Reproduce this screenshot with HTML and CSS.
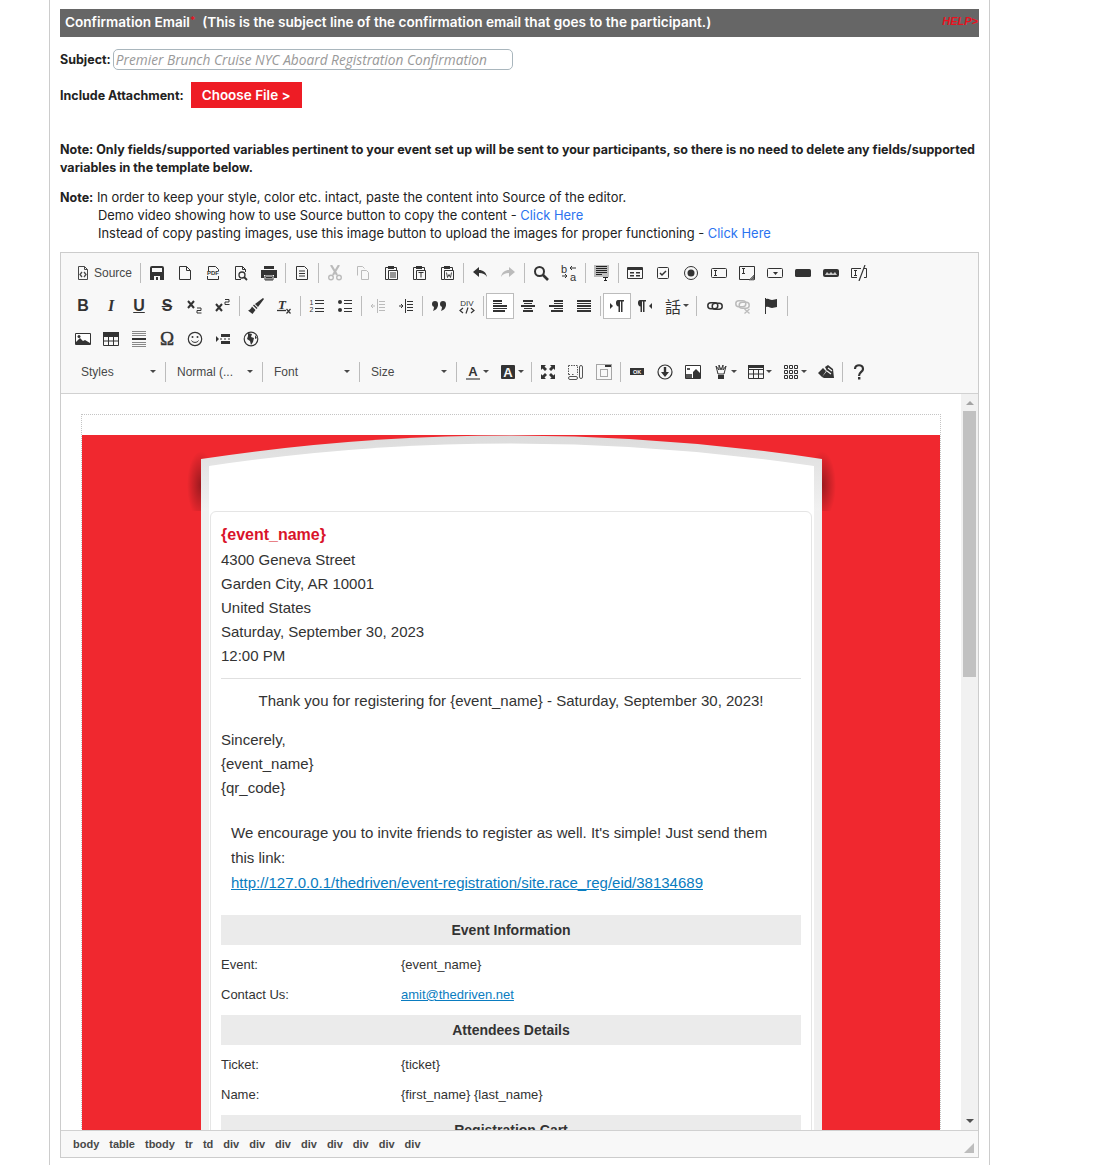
FILE: index.html
```html
<!DOCTYPE html>
<html lang="en">
<head>
    <meta charset="UTF-8">
    <title>Confirmation Email</title>
    <link rel="stylesheet" href="styles.css">
</head>
<body>
    <svg class="sprite">
        <symbol id="source" viewBox="0 0 16 16"><path d="M3.500 1.500h6l3 3v10h-9z M9.500 1.500v3h3" fill="none" stroke="currentColor"/><path d="M7 7L5 9.500 7 12M9 7l2 2.500L9 12" fill="none" stroke="currentColor" stroke-width="1.300"/></symbol>
        <symbol id="save" viewBox="0 0 16 16"><path d="M1 3a2 2 0 0 1 2-2h10a2 2 0 0 1 2 2v12H1z" fill="currentColor"/><path d="M3 3h10v4H3zM5 11h6v4H5z" fill="#f8f8f8"/><path d="M7 12h2v3H7z" fill="currentColor"/></symbol>
        <symbol id="newpage" viewBox="0 0 16 16"><path d="M2.500 1.500h7l4 4v9h-11z M9.500 1.500v4h4" fill="none" stroke="currentColor"/></symbol>
        <symbol id="pdf" viewBox="0 0 16 16"><path d="M3.500 6V1.500h7l3 3V6M2.500 11v3.500h11V11" fill="none" stroke="currentColor"/><text x="8" y="10.200" class="tiny">PDF</text></symbol>
        <symbol id="preview" viewBox="0 0 16 16"><path d="M8 14.500H2.500v-13h7l3 3V7M9.500 1.500v3h3" fill="none" stroke="currentColor"/><circle cx="9" cy="10" r="3" fill="none" stroke="currentColor" stroke-width="1.300"/><path d="M11 12l3 3" stroke="currentColor" stroke-width="1.800"/></symbol>
        <symbol id="print" viewBox="0 0 16 16"><path d="M3 1h10v3H3zM0 5h16v8h-3v-3H3v3H0z" fill="currentColor"/><path d="M4 11h8v4H4zM5 12.500h6M5 14h6" fill="none" stroke="currentColor"/></symbol>
        <symbol id="templates" viewBox="0 0 16 16"><path d="M2.500 1.500h8l3 3v10h-11z" fill="none" stroke="currentColor"/><path d="M5 6h6M5 8.500h6M5 11h6" stroke="currentColor"/></symbol>
        <symbol id="cut" viewBox="0 0 16 16"><path d="M4 0l6 10M12 0L6 10" stroke="currentColor" stroke-width="2.200"/><circle cx="4" cy="12.500" r="2.300" fill="none" stroke="currentColor" stroke-width="1.400"/><circle cx="12" cy="12.500" r="2.300" fill="none" stroke="currentColor" stroke-width="1.400"/></symbol>
        <symbol id="copy" viewBox="0 0 16 16"><path d="M2.500 10.500v-9h5l2 2M6.500 5.500h5l2 2v7h-7z" fill="none" stroke="currentColor"/></symbol>
        <symbol id="paste" viewBox="0 0 16 16"><path d="M5 2.500H2.500v12H5M11 2.500h2.500V5" fill="none" stroke="currentColor"/><path d="M5 1h6v3H5z" fill="currentColor"/><path d="M5.500 5.500h9v9h-9z" fill="none" stroke="currentColor"/><path d="M7 8h6M7 10h6M7 12h6" stroke="currentColor"/></symbol>
        <symbol id="pastetext" viewBox="0 0 16 16"><path d="M5 2.500H2.500v12H5M11 2.500h2.500V5" fill="none" stroke="currentColor"/><path d="M5 1h6v3H5z" fill="currentColor"/><path d="M5.500 5.500h9v9h-9z" fill="none" stroke="currentColor"/><path d="M7.500 7.500h5M10 7.500v5" stroke="currentColor"/></symbol>
        <symbol id="pasteword" viewBox="0 0 16 16"><path d="M5 2.500H2.500v12H5M11 2.500h2.500V5" fill="none" stroke="currentColor"/><path d="M5 1h6v3H5z" fill="currentColor"/><path d="M5.500 5.500h9v9h-9z" fill="none" stroke="currentColor"/><path d="M7.500 7.500l1 5 1.500-3 1.500 3 1-5" fill="none" stroke="currentColor" stroke-width=".9"/></symbol>
        <symbol id="undo" viewBox="0 0 16 16"><path d="M1 7l6-5v3c4 0 7 2 8 7-2-3-4-4-8-4v4z" fill="currentColor"/></symbol>
        <symbol id="redo" viewBox="0 0 16 16"><path d="M15 7L9 2v3c-4 0-7 2-8 7 2-3 4-4 8-4v4z" fill="currentColor"/></symbol>
        <symbol id="find" viewBox="0 0 16 16"><circle cx="6.500" cy="6.500" r="4.500" fill="none" stroke="currentColor" stroke-width="2"/><path d="M10 10l5 5" stroke="currentColor" stroke-width="2.600"/></symbol>
        <symbol id="replace" viewBox="0 0 16 16"><text x="3" y="8" class="small">b</text><text x="12" y="16" class="small">a</text><path d="M15 3H9M11 1L9 3l2 2M1 11h5M4 9l2 2-2 2" fill="none" stroke="currentColor"/></symbol>
        <symbol id="selectall" viewBox="0 0 16 16"><path d="M0 0h15v12H0z" fill="#bdbdbd"/><path d="M2 1.500h11M2 3.500h11M2 5.500h11M2 7.500h11M2 9.500h6M9 12.500h5M11.500 12.500v3M10 15.500h3" stroke="#222" fill="none"/></symbol>
        <symbol id="form" viewBox="0 0 16 16"><path d="M.5 2.500h15v11H.5z" fill="none" stroke="currentColor"/><path d="M1 3h14v2H1zM3 7h4v1.500H3zM9 7h4v1.500H9zM3 10h4v1.500H3zM9 10h4v1.500H9z" fill="currentColor"/></symbol>
        <symbol id="checkbox" viewBox="0 0 16 16"><rect x="2.500" y="2.500" width="11" height="11" rx="1" fill="none" stroke="currentColor"/><path d="M5 8l2 2 4-4" fill="none" stroke="currentColor" stroke-width="1.500"/></symbol>
        <symbol id="radio" viewBox="0 0 16 16"><circle cx="8" cy="8" r="6.500" fill="none" stroke="currentColor"/><circle cx="8" cy="8" r="3.500" fill="currentColor"/></symbol>
        <symbol id="textfield" viewBox="0 0 16 16"><rect x=".5" y="3.500" width="15" height="9" rx="1" fill="none" stroke="currentColor"/><path d="M3 5.500h3M4.500 5.500v5M3 10.500h3" fill="none" stroke="currentColor"/></symbol>
        <symbol id="textarea" viewBox="0 0 16 16"><path d="M.5 1.500h15v13H.5z" fill="none" stroke="currentColor"/><path d="M3 3.500h3M4.500 3.500v5M3 8.500h3" fill="none" stroke="currentColor"/><path d="M15 10v5h-5zM12 15l3-3" fill="#888" stroke="#444" stroke-width=".6"/></symbol>
        <symbol id="select" viewBox="0 0 16 16"><rect x=".5" y="3.500" width="15" height="9" rx="1" fill="none" stroke="currentColor"/><path d="M6 7h5L8.500 10z" fill="currentColor"/></symbol>
        <symbol id="button" viewBox="0 0 16 16"><rect y="4" width="16" height="8" rx="1.500" fill="currentColor"/></symbol>
        <symbol id="imagebutton" viewBox="0 0 16 16"><rect y="4" width="16" height="8" rx="2" fill="currentColor"/><path d="M2 10l2-3 2 2 2-2 2 2 2-2 2 3z" fill="#ccc"/></symbol>
        <symbol id="hiddenfield" viewBox="0 0 16 16"><path d="M10 3.500H.5v9H6M13 3.500h2.500v9H13" fill="none" stroke="currentColor"/><path d="M3 5.500h3M4.500 5.500v5M3 10.500h3" fill="none" stroke="currentColor"/><path d="M14 0L8 16" stroke="currentColor" stroke-width="1.200"/></symbol>
        <symbol id="subs" viewBox="0 0 16 16"><path d="M1 3l6 7M7 3l-6 7" stroke="currentColor" stroke-width="2"/><path d="M10 10h4v2.500h-4V15h4.500" fill="none" stroke="currentColor"/></symbol>
        <symbol id="sups" viewBox="0 0 16 16"><path d="M1 6l6 7M7 6l-6 7" stroke="currentColor" stroke-width="2"/><path d="M10 1.500h4V4h-4v2.500h4.500" fill="none" stroke="currentColor"/></symbol>
        <symbol id="brush" viewBox="0 0 16 16"><path d="M15 0l1 1-6 8-3-3z" fill="currentColor"/><path d="M6 6.500l3.500 3.500-1 1L5 7.500z" fill="currentColor"/><path d="M4 8.500l3.500 3.500-3 4-4.500-3.500c2-.5 3-2 4-4z" fill="currentColor"/></symbol>
        <symbol id="clearformat" viewBox="0 0 16 16"><text x="6" y="11" class="ital">T</text><path d="M1 12.500h9" stroke="currentColor" stroke-width="1.300"/><path d="M10.500 11l4 4.500M14.500 11l-4 4.500" stroke="currentColor" stroke-width="1.200"/></symbol>
        <symbol id="ol" viewBox="0 0 16 16"><text x="2.500" y="6.500" class="num">1</text><text x="2.500" y="14" class="num">2</text><path d="M6 2.500h9M6 5.500h9M6 10.500h9M6 13.500h9" stroke="currentColor"/></symbol>
        <symbol id="ul" viewBox="0 0 16 16"><circle cx="3" cy="4" r="2" fill="currentColor"/><circle cx="3" cy="12" r="2" fill="currentColor"/><path d="M7 2.500h8M7 5.500h8M7 10.500h8M7 13.500h8" stroke="currentColor"/></symbol>
        <symbol id="outdent" viewBox="0 0 16 16"><path d="M7.500 1v14M9 3.500h6M9 6.500h6M9 9.500h6M9 12.500h6" stroke="currentColor"/><path d="M5 8H1M3 6L1 8l2 2" fill="none" stroke="currentColor"/></symbol>
        <symbol id="indent" viewBox="0 0 16 16"><path d="M7.500 1v14M9 3.500h6M9 6.500h6M9 9.500h6M9 12.500h6" stroke="currentColor"/><path d="M1 8h4M3 6l2 2-2 2" fill="none" stroke="currentColor"/></symbol>
        <symbol id="quote" viewBox="0 0 16 16"><circle cx="4" cy="6" r="3" fill="currentColor"/><circle cx="12" cy="6" r="3" fill="currentColor"/><path d="M7 6c0 4-2 6-5 7 1-2 1-4 1-6zM15 6c0 4-2 6-5 7 1-2 1-4 1-6z" fill="currentColor"/></symbol>
        <symbol id="creatediv" viewBox="0 0 16 16"><text x="8" y="7.500" class="tiny2">DIV</text><path d="M4 10l-3 2.500L4 15M12 10l3 2.500-3 2.500M9 9.500l-2 6" fill="none" stroke="currentColor" stroke-width="1.200"/></symbol>
        <symbol id="left" viewBox="0 0 16 16"><path d="M1 2h9v2H1zM1 7h14v2H1zM1 12h12v2H1z" fill="currentColor"/><path d="M1 5.500h9M1 10.500h14" stroke="currentColor"/></symbol>
        <symbol id="center" viewBox="0 0 16 16"><path d="M3 2h10v2H3zM1 7h14v2H1zM3 12h10v2H3z" fill="currentColor"/><path d="M4 5.500h8M4 10.500h8" stroke="currentColor"/></symbol>
        <symbol id="right" viewBox="0 0 16 16"><path d="M6 2h9v2H6zM1 7h14v2H1zM3 12h12v2H3z" fill="currentColor"/><path d="M6 5.500h9M6 10.500h9" stroke="currentColor"/></symbol>
        <symbol id="justify" viewBox="0 0 16 16"><path d="M1 2h14v2H1zM1 7h14v2H1zM1 12h14v2H1z" fill="currentColor"/><path d="M1 5.500h14M1 10.500h14" stroke="currentColor"/></symbol>
        <symbol id="ltr" viewBox="0 0 16 16"><path d="M1 5l3 3-3 3z" fill="currentColor"/><path d="M9 2h6v1.500h-1.500V14H12V3.500h-1V14H9.500V8.500C6.500 8.500 6 2 9 2z" fill="currentColor"/></symbol>
        <symbol id="rtl" viewBox="0 0 16 16"><path d="M15 5l-3 3 3 3z" fill="currentColor"/><path d="M3 2h6v1.500H7.500V14H6V3.500H5V14H3.500V8.500C.5 8.500 0 2 3 2z" fill="currentColor"/></symbol>
        <symbol id="link" viewBox="0 0 16 16"><rect x=".8" y="4.800" width="10" height="6" rx="3" fill="none" stroke="currentColor" stroke-width="1.500"/><rect x="5.200" y="5.200" width="10" height="6" rx="3" fill="none" stroke="currentColor" stroke-width="1.500"/></symbol>
        <symbol id="unlink" viewBox="0 0 16 16"><rect x=".8" y="2.800" width="10" height="6" rx="3" fill="none" stroke="currentColor" stroke-width="1.500"/><rect x="4.200" y="4.200" width="10" height="6" rx="3" fill="none" stroke="currentColor" stroke-width="1.500"/><path d="M9.500 11l5 4.500M14.500 11l-5 4.500" stroke="currentColor" stroke-width="1.300"/></symbol>
        <symbol id="anchor" viewBox="0 0 16 16"><path d="M2.500 0v16" stroke="currentColor"/><path d="M3 1c3-1 4 1 6 1l5-1v8l-5 1c-2 0-3-2-6-1z" fill="currentColor"/></symbol>
        <symbol id="image" viewBox="0 0 16 16"><path d="M.5 2.500h15v11H.5z" fill="#fff" stroke="currentColor"/><path d="M1 13V11l4-4 3 3 2-1 5 3v1z" fill="currentColor"/><circle cx="4" cy="5.500" r="1.500" fill="currentColor"/></symbol>
        <symbol id="table" viewBox="0 0 16 16"><path d="M.5 1.500h15v13H.5zM.5 5.500h15M.5 10h15M5.500 5.500v9M10.500 5.500v9" fill="none" stroke="currentColor"/><path d="M0 1h16v4H0z" fill="currentColor"/></symbol>
        <symbol id="hr" viewBox="0 0 16 16"><path d="M1 .5h14M1 2.500h14M1 4.500h14M1 11.500h14M1 13.500h14M1 15.500h14" stroke="#888"/><path d="M1 7h14v2H1z" fill="currentColor"/></symbol>
        <symbol id="smiley" viewBox="0 0 16 16"><circle cx="8" cy="8" r="6.700" fill="none" stroke="currentColor" stroke-width="1.200"/><circle cx="5.500" cy="6" r="1" fill="currentColor"/><circle cx="10.500" cy="6" r="1" fill="currentColor"/><path d="M4.500 9.500c1 2.500 6 2.500 7 0" fill="none" stroke="currentColor"/></symbol>
        <symbol id="pagebreak" viewBox="0 0 16 16"><path d="M1 5l3 3-3 3z" fill="currentColor"/><path d="M6 3h9v3H6zM6 10h9v3H6z" fill="currentColor"/><path d="M5 8h2M9 8h2M13 8h2" stroke="currentColor"/></symbol>
        <symbol id="globe" viewBox="0 0 16 16"><circle cx="8" cy="8" r="6.800" fill="none" stroke="currentColor" stroke-width="1.200"/><path d="M5 2l4 1-1 3 3 1-1 4-2 3-1-4-3-2 1-3zM12 4l2 3-2 1z" fill="currentColor"/></symbol>
        <symbol id="textcolor" viewBox="0 0 16 16"><text x="8" y="11.500" class="big">A</text><path d="M1 14h14v2H1z" fill="#8a8a8a"/></symbol>
        <symbol id="bgcolor" viewBox="0 0 16 16"><rect x="1" y="1" width="14" height="14" rx="1" fill="currentColor"/><text x="8" y="12.500" class="big white">A</text></symbol>
        <symbol id="maximize" viewBox="0 0 16 16"><path d="M1 1h5L4.500 2.500 7 5 5 7 2.500 4.500 1 6zM15 1v5l-1.500-1.500L11 7 9 5l2.500-2.500L10 1zM1 15v-5l1.500 1.500L5 9l2 2-2.500 2.500L6 15zM15 15h-5l1.500-1.500L9 11l2-2 2.500 2.500L15 10z" fill="currentColor"/></symbol>
        <symbol id="showblocks" viewBox="0 0 16 16"><path d="M.5 1.500h9v9M.5 1.500v9M.5 10.500h2M4 10.500h2" fill="none" stroke="#555" stroke-dasharray="1.500 1"/><rect x="11.500" y="1.500" width="3" height="13" rx="1.500" fill="none" stroke="#555"/><rect x=".5" y="12.500" width="9" height="3" rx="1.500" fill="none" stroke="#555"/></symbol>
        <symbol id="blocks" viewBox="0 0 16 16"><path d="M.5.500h15v15H.5z" fill="none" stroke="#555" stroke-dasharray="1 1"/><path d="M9 1h6v2H9z" fill="currentColor"/><path d="M4.500 5.500h7v7h-7z" fill="none" stroke="#555" stroke-dasharray="1 1"/></symbol>
        <symbol id="okbtn" viewBox="0 0 16 16"><path d="M1 4h14v7H1z" fill="currentColor"/><text x="8" y="9.500" class="tiny3">OK</text></symbol>
        <symbol id="download" viewBox="0 0 16 16"><circle cx="8" cy="8" r="7" fill="none" stroke="currentColor" stroke-width="1.200"/><path d="M6.800 3h2.400v5H12l-4 5-4-5h2.800z" fill="currentColor"/></symbol>
        <symbol id="gallery" viewBox="0 0 16 16"><path d="M.5 1.500h15v13H.5z" fill="#fff" stroke="currentColor"/><path d="M8 8l3-3 4 4v5H8z" fill="currentColor"/><path d="M2 4h3v2H2zM1 10h6v4H1z" fill="#555"/></symbol>
        <symbol id="crown" viewBox="0 0 16 16"><path d="M3 2l3 4V1l2 5 2-5v5l3-4-2 8H5z" fill="none" stroke="currentColor"/><path d="M5 11h6v4H5z" fill="currentColor"/></symbol>
        <symbol id="tablesel" viewBox="0 0 16 16"><path d="M.5 1.500h15v13H.5zM.5 5.500h15M.5 10h15M5.500 5.500v9M10.500 5.500v9" fill="none" stroke="currentColor"/><path d="M0 1h16v3H0z" fill="currentColor"/></symbol>
        <symbol id="grid" viewBox="0 0 16 16"><path d="M1.500 1.500h3v3h-3zM6.500 1.500h3v3h-3zM11.500 1.500h3v3h-3zM1.500 6.500h3v3h-3zM6.500 6.500h3v3h-3zM11.500 6.500h3v3h-3zM1.500 11.500h3v3h-3zM6.500 11.500h3v3h-3zM11.500 11.500h3v3h-3z" fill="none" stroke="currentColor"/></symbol>
        <symbol id="wand" viewBox="0 0 16 16"><path d="M0 9l5-5 3 3-4 6zM7 3l3-2 5 4 1 9H6l-2-1 5-6z" fill="currentColor"/><path d="M10 4l4 3M9 7l4 3" stroke="#f8f8f8" stroke-width="1.200"/></symbol>
        <symbol id="help" viewBox="0 0 16 16"><path d="M4 5c0-5 8-5 8 0 0 3-4 3-4 7" fill="none" stroke="currentColor" stroke-width="2.200"/><path d="M7 13h2.400v2.500H7z" fill="currentColor"/></symbol>
    </svg>

    <div class="wrap">
        <div class="bar">
            <span class="bar-title">Confirmation Email<i class="req">*</i>&nbsp; (This is the subject line of the confirmation email that goes to the participant.)</span>
            <a class="help" href="#">HELP&gt;</a>
        </div>

        <div class="subject">
            <label class="strong">Subject:</label>
            <input class="subject-input" type="text" placeholder="Premier Brunch Cruise NYC Aboard Registration Confirmation">
        </div>

        <div class="attach">
            <label class="strong">Include Attachment:</label>
            <a class="choose" href="#">Choose File &gt;</a>
        </div>

        <p class="note-bold">Note: Only fields/supported variables pertinent to your event set up will be sent to your participants, so there is no need to delete any fields/supported variables in the template below.</p>

        <div class="note">
            <p><b class="strong">Note:</b> In order to keep your style, color etc. intact, paste the content into Source of the editor.</p>
            <p class="indent">Demo video showing how to use Source button to copy the content - <a href="#">Click Here</a></p>
            <p class="indent">Instead of copy pasting images, use this image button to upload the images for proper functioning - <a href="#">Click Here</a></p>
        </div>

        <div class="editor">
            <div class="toolbar">
                <div class="row">
                    <span class="btn source"><svg class="ic"><use href="#source"/></svg>Source</span>
                    <i class="sep"></i>
                    <span class="btn"><svg class="ic"><use href="#save"/></svg></span>
                    <span class="btn"><svg class="ic"><use href="#newpage"/></svg></span>
                    <span class="btn"><svg class="ic"><use href="#pdf"/></svg></span>
                    <span class="btn"><svg class="ic"><use href="#preview"/></svg></span>
                    <span class="btn"><svg class="ic"><use href="#print"/></svg></span>
                    <i class="sep"></i>
                    <span class="btn"><svg class="ic"><use href="#templates"/></svg></span>
                    <i class="sep"></i>
                    <span class="btn off"><svg class="ic"><use href="#cut"/></svg></span>
                    <span class="btn off"><svg class="ic"><use href="#copy"/></svg></span>
                    <span class="btn"><svg class="ic"><use href="#paste"/></svg></span>
                    <span class="btn"><svg class="ic"><use href="#pastetext"/></svg></span>
                    <span class="btn"><svg class="ic"><use href="#pasteword"/></svg></span>
                    <i class="sep"></i>
                    <span class="btn"><svg class="ic"><use href="#undo"/></svg></span>
                    <span class="btn off"><svg class="ic"><use href="#redo"/></svg></span>
                    <i class="sep"></i>
                    <span class="btn"><svg class="ic"><use href="#find"/></svg></span>
                    <span class="btn"><svg class="ic"><use href="#replace"/></svg></span>
                    <i class="sep"></i>
                    <span class="btn"><svg class="ic"><use href="#selectall"/></svg></span>
                    <i class="sep"></i>
                    <span class="btn"><svg class="ic"><use href="#form"/></svg></span>
                    <span class="btn"><svg class="ic"><use href="#checkbox"/></svg></span>
                    <span class="btn"><svg class="ic"><use href="#radio"/></svg></span>
                    <span class="btn"><svg class="ic"><use href="#textfield"/></svg></span>
                    <span class="btn"><svg class="ic"><use href="#textarea"/></svg></span>
                    <span class="btn"><svg class="ic"><use href="#select"/></svg></span>
                    <span class="btn"><svg class="ic"><use href="#button"/></svg></span>
                    <span class="btn"><svg class="ic"><use href="#imagebutton"/></svg></span>
                    <span class="btn"><svg class="ic"><use href="#hiddenfield"/></svg></span>
                </div>
                <div class="row">
                    <span class="btn"><b class="fmt">B</b></span>
                    <span class="btn"><b class="fmt it">I</b></span>
                    <span class="btn"><b class="fmt un">U</b></span>
                    <span class="btn"><b class="fmt st">S</b></span>
                    <span class="btn"><svg class="ic"><use href="#subs"/></svg></span>
                    <span class="btn"><svg class="ic"><use href="#sups"/></svg></span>
                    <i class="sep"></i>
                    <span class="btn"><svg class="ic"><use href="#brush"/></svg></span>
                    <span class="btn"><svg class="ic"><use href="#clearformat"/></svg></span>
                    <i class="sep"></i>
                    <span class="btn"><svg class="ic"><use href="#ol"/></svg></span>
                    <span class="btn"><svg class="ic"><use href="#ul"/></svg></span>
                    <i class="sep"></i>
                    <span class="btn off"><svg class="ic"><use href="#outdent"/></svg></span>
                    <span class="btn"><svg class="ic"><use href="#indent"/></svg></span>
                    <i class="sep"></i>
                    <span class="btn"><svg class="ic"><use href="#quote"/></svg></span>
                    <span class="btn"><svg class="ic"><use href="#creatediv"/></svg></span>
                    <i class="sep"></i>
                    <span class="btn on"><svg class="ic"><use href="#left"/></svg></span>
                    <span class="btn"><svg class="ic"><use href="#center"/></svg></span>
                    <span class="btn"><svg class="ic"><use href="#right"/></svg></span>
                    <span class="btn"><svg class="ic"><use href="#justify"/></svg></span>
                    <i class="sep"></i>
                    <span class="btn on"><svg class="ic"><use href="#ltr"/></svg></span>
                    <span class="btn"><svg class="ic"><use href="#rtl"/></svg></span>
                    <span class="btn drop"><span class="lang">話</span><i class="caret"></i></span>
                    <i class="sep"></i>
                    <span class="btn lang-gap"><svg class="ic"><use href="#link"/></svg></span>
                    <span class="btn off"><svg class="ic"><use href="#unlink"/></svg></span>
                    <span class="btn"><svg class="ic"><use href="#anchor"/></svg></span>
                    <i class="sep"></i>
                </div>
                <div class="row">
                    <span class="btn"><svg class="ic"><use href="#image"/></svg></span>
                    <span class="btn"><svg class="ic"><use href="#table"/></svg></span>
                    <span class="btn"><svg class="ic"><use href="#hr"/></svg></span>
                    <span class="btn"><b class="omega">Ω</b></span>
                    <span class="btn"><svg class="ic"><use href="#smiley"/></svg></span>
                    <span class="btn"><svg class="ic"><use href="#pagebreak"/></svg></span>
                    <span class="btn"><svg class="ic"><use href="#globe"/></svg></span>
                </div>
                <div class="row">
                    <span class="combo first">Styles<i class="caret"></i></span>
                    <i class="sep"></i>
                    <span class="combo">Normal (...<i class="caret"></i></span>
                    <i class="sep"></i>
                    <span class="combo">Font<i class="caret"></i></span>
                    <i class="sep"></i>
                    <span class="combo">Size<i class="caret"></i></span>
                    <i class="sep"></i>
                    <span class="btn drop"><svg class="ic"><use href="#textcolor"/></svg><i class="caret"></i></span>
                    <span class="btn drop"><svg class="ic"><use href="#bgcolor"/></svg><i class="caret"></i></span>
                    <i class="sep"></i>
                    <span class="btn"><svg class="ic"><use href="#maximize"/></svg></span>
                    <span class="btn"><svg class="ic"><use href="#showblocks"/></svg></span>
                    <span class="btn"><svg class="ic"><use href="#blocks"/></svg></span>
                    <i class="sep"></i>
                    <span class="btn"><svg class="ic"><use href="#okbtn"/></svg></span>
                    <span class="btn"><svg class="ic"><use href="#download"/></svg></span>
                    <span class="btn"><svg class="ic"><use href="#gallery"/></svg></span>
                    <span class="btn drop"><svg class="ic"><use href="#crown"/></svg><i class="caret"></i></span>
                    <span class="btn drop"><svg class="ic"><use href="#tablesel"/></svg><i class="caret"></i></span>
                    <span class="btn drop"><svg class="ic"><use href="#grid"/></svg><i class="caret"></i></span>
                    <span class="btn"><svg class="ic"><use href="#wand"/></svg></span>
                    <i class="sep"></i>
                    <span class="btn"><svg class="ic"><use href="#help"/></svg></span>
                </div>
            </div>

            <div class="content">
                <div class="doc">
                    <div class="mail">
                        <div class="red">
                            <div class="sheet">
                                <svg class="sheet-top" viewBox="0 0 621 76">
                                    <defs>
                                        <radialGradient id="shade">
                                            <stop offset="0" stop-color="#000" stop-opacity=".36"/>
                                            <stop offset="1" stop-color="#000" stop-opacity="0"/>
                                        </radialGradient>
                                        <linearGradient id="frame" x1="0" y1="0" x2="0" y2="1">
                                            <stop offset="0" stop-color="#dcdcdc"/>
                                            <stop offset="1" stop-color="#f1f1f1"/>
                                        </linearGradient>
                                        <clipPath id="cut-shade">
                                            <rect x="-20" y="0" width="661" height="76"/>
                                        </clipPath>
                                    </defs>
                                    <g clip-path="url(#cut-shade)">
                                        <ellipse cx="0" cy="50" rx="14" ry="34" fill="url(#shade)"/>
                                        <ellipse cx="621" cy="50" rx="14" ry="34" fill="url(#shade)"/>
                                    </g>
                                    <path d="M0 24Q310.500 -23 621 24V76H0z" fill="url(#frame)"/>
                                    <path d="M8 31Q310.500 -14 613 31V76H8z" fill="#fff"/>
                                </svg>
                                <div class="card">
                                    <h2 class="event-name">{event_name}</h2>
                                    <div>4300 Geneva Street</div>
                                    <div>Garden City, AR 10001</div>
                                    <div>United States</div>
                                    <div>Saturday, September 30, 2023</div>
                                    <div>12:00 PM</div>
                                    <hr class="rule">
                                    <div class="thanks">Thank you for registering for {event_name} - Saturday, September 30, 2023!</div>
                                    <div class="signoff">
                                        <div>Sincerely,</div>
                                        <div>{event_name}</div>
                                        <div>{qr_code}</div>
                                    </div>
                                    <div class="invite">We encourage you to invite friends to register as well. It's simple! Just send them this link:<br><a href="#">http://127.0.0.1/thedriven/event-registration/site.race_reg/eid/38134689</a></div>
                                    <div class="band">Event Information</div>
                                    <div class="rows">
                                        <div class="info"><span>Event:</span><span>{event_name}</span></div>
                                        <div class="info"><span>Contact Us:</span><a href="#">amit@thedriven.net</a></div>
                                    </div>
                                    <div class="band">Attendees Details</div>
                                    <div class="rows">
                                        <div class="info"><span>Ticket:</span><span>{ticket}</span></div>
                                        <div class="info"><span>Name:</span><span>{first_name} {last_name}</span></div>
                                    </div>
                                    <div class="band">Registration Cart</div>
                                </div>
                            </div>
                        </div>
                    </div>
                </div>
                <div class="scrollbar">
                    <i class="arrow-up"></i>
                    <div class="thumb"></div>
                    <i class="arrow-down"></i>
                </div>
            </div>

            <div class="path">
                <span>body</span><span>table</span><span>tbody</span><span>tr</span><span>td</span><span>div</span><span>div</span><span>div</span><span>div</span><span>div</span><span>div</span><span>div</span><span>div</span>
                <i class="resize"></i>
            </div>
        </div>
    </div>
</body>
</html>
```

FILE: styles.css
```css
* {
    box-sizing: border-box;
}

html, body {
    margin: 0;
    padding: 0;
    background: #fff;
}

.sprite {
    display: none;
}

.wrap {
    margin-left: 49px;
    width: 941px;
    height: 1165px;
    overflow: hidden;
    padding: 9px 10px 0;
    border-left: 1px solid #ccc;
    border-right: 1px solid #ccc;
    font-family: 'Inter', sans-serif;
    font-size: 12.9px;
    color: #222;
}

.strong {
    font-size: 12.5px;
    font-weight: 700;
    color: #222;
}

/* heading bar */
.bar {
    height: 28px;
    background: #666;
    color: #fff;
    font-size: 13.6px;
    font-weight: 600;
    display: flex;
    align-items: center;
    justify-content: space-between;
    padding: 0 1px 2px 5px;
}

.req {
    color: #e8121f;
    font-style: normal;
    font-size: 10px;
    vertical-align: 3px;
}

.help {
    font-family: 'Liberation Sans', sans-serif;
    font-size: 11px;
    font-weight: 700;
    font-style: italic;
    color: #e8121f;
    text-decoration: none;
    margin-top: -2px;
}

/* subject + attachment */
.subject {
    display: flex;
    align-items: center;
    gap: 2px;
    margin-top: 12px;
    height: 21px;
}

.subject-input {
    width: 400px;
    height: 21px;
    padding: 0 2px;
    border: 1px solid #a9b6bd;
    border-radius: 5px;
    font-family: 'Open Sans', sans-serif;
    font-size: 13.7px;
    font-style: italic;
}

.subject-input::placeholder {
    color: #999;
}

.attach {
    display: flex;
    align-items: center;
    gap: 7px;
    margin-top: 12px;
    height: 26px;
}

.choose {
    display: flex;
    align-items: center;
    justify-content: center;
    width: 111px;
    height: 26px;
    background: #ee1c25;
    color: #fff;
    font-weight: 600;
    font-size: 13.5px;
    text-decoration: none;
}

/* notes */
.note-bold {
    margin: 33px 0 0;
    line-height: 18px;
    font-size: 12.5px;
    font-weight: 700;
}

.note {
    margin-top: 12px;
    line-height: 18px;
}

.note p {
    margin: 0;
}

.note .indent {
    padding-left: 38px;
}

.note a {
    color: #2b73f0;
    text-decoration: none;
}

/* editor */
.editor {
    margin-top: 9px;
    height: 906px;
    border: 1px solid #ccc;
    font-family: 'Liberation Sans', Arial, sans-serif;
    display: flex;
    flex-direction: column;
}

.toolbar {
    flex: none;
    height: 141px;
    padding: 3px 0 0 8px;
    background: #f8f8f8;
    border-bottom: 1px solid #d1d1d1;
    color: #333;
}

.row {
    display: flex;
    align-items: center;
    height: 33px;
}

.btn {
    flex: none;
    display: flex;
    align-items: center;
    justify-content: center;
    width: 28px;
    height: 26px;
    border: 1px solid transparent;
}

.btn.on {
    background: #fff;
    border-color: #bcbcbc;
}

.btn.off .ic {
    opacity: .3;
}

.btn.source {
    width: 69px;
    justify-content: flex-start;
    padding-left: 5px;
    gap: 3px;
    font-size: 12px;
    color: #484848;
}

.btn.drop {
    width: 35px;
    justify-content: flex-start;
    padding-left: 5px;
}

.btn.lang-gap {
    margin-left: 2px;
}

.ic {
    width: 16px;
    height: 16px;
    flex: none;
}

.lang {
    width: 16px;
    font-family: 'Noto Sans CJK TC', sans-serif;
    font-size: 16px;
    line-height: 16px;
    color: #333;
}

.sep {
    flex: none;
    width: 1px;
    height: 20px;
    margin: 0 2px;
    background: #bcbcbc;
}

.caret {
    flex: none;
    width: 0;
    height: 0;
    margin-left: 2px;
    border-left: 3px solid transparent;
    border-right: 3px solid transparent;
    border-top: 3px solid #484848;
}

.combo {
    flex: none;
    display: flex;
    align-items: center;
    justify-content: space-between;
    width: 92px;
    height: 26px;
    padding: 0 7px 0 9px;
    font-size: 12px;
    color: #484848;
}

.combo.first {
    width: 94px;
    padding-left: 12px;
}

.fmt {
    font-family: 'Liberation Sans', sans-serif;
    font-size: 16px;
    line-height: 16px;
    color: #333;
}

.fmt.it {
    font-family: 'Liberation Serif', serif;
    font-style: italic;
}

.fmt.un {
    text-decoration: underline;
}

.fmt.st {
    text-decoration: line-through;
}

.omega {
    font-family: 'Liberation Serif', serif;
    font-size: 19px;
    line-height: 16px;
    font-weight: 400;
    -webkit-text-stroke: .4px #333;
    color: #333;
}

text {
    font-family: 'Liberation Sans', sans-serif;
    fill: #333;
    text-anchor: middle;
}

.tiny {
    font-size: 6px;
    font-weight: 700;
}

.tiny2 {
    font-size: 8px;
}

.tiny3 {
    font-size: 5.500px;
    font-weight: 700;
    fill: #f8f8f8;
}

.small {
    font-size: 11px;
}

.ital {
    font-family: 'Liberation Serif', serif;
    font-size: 13px;
    font-weight: 700;
    font-style: italic;
}

.num {
    font-size: 7px;
}

.big {
    font-size: 13px;
    font-weight: 700;
}

.white {
    fill: #f8f8f8;
}

/* document area */
.content {
    flex: 1;
    min-height: 0;
    display: flex;
}

.doc {
    flex: 1;
    min-width: 0;
    overflow: hidden;
    padding: 20px 0 0 20px;
}

.mail {
    width: 860px;
    padding-top: 20px;
    border: 1px dotted #c4c4c4;
    border-bottom: 0;
}

.red {
    background: #f0282f;
    padding-left: 119px;
}

.sheet {
    width: 621px;
}

.sheet-top {
    display: block;
    width: 621px;
    height: 76px;
    overflow: visible;
}

.card {
    width: 621px;
    padding: 12px 13px 0 12px;
    border-left: 8px solid #f0f0f0;
    border-right: 8px solid #f0f0f0;
    background: #fff;
    font-size: 15px;
    line-height: 24px;
    color: #333;
    position: relative;
}

.card::before {
    content: "";
    position: absolute;
    left: 1px;
    right: 2px;
    top: 0;
    height: 900px;
    border: 1px solid #e5e5e5;
    border-radius: 6px;
}

.event-name {
    margin: 0 0 1px;
    font-size: 16px;
    line-height: 24px;
    font-weight: 700;
    color: #d9132a;
}

.rule {
    margin: 10px 0 0;
    border: 0;
    border-top: 1px solid #e0e0e0;
}

.thanks {
    margin-top: 10px;
    text-align: center;
}

.signoff {
    margin-top: 15px;
}

.invite {
    margin-top: 20px;
    padding: 0 30px 0 10px;
    line-height: 25px;
}

a {
    color: #0a7cc0;
}

.band {
    height: 30px;
    margin-top: 20px;
    background: #ebebeb;
    text-align: center;
    font-size: 14px;
    line-height: 30px;
    font-weight: 700;
}

.rows {
    padding: 5px 0 5px;
}

.rows + .band {
    margin-top: 0;
}

.info {
    display: grid;
    grid-template-columns: 180px 1fr;
    height: 30px;
    align-items: center;
    font-size: 13px;
}

/* fake scrollbar */
.scrollbar {
    flex: none;
    width: 17px;
    background: #f1f1f1;
    display: flex;
    flex-direction: column;
    align-items: center;
    padding: 7px 0 7px;
}

.arrow-up, .arrow-down {
    width: 0;
    height: 0;
    border-left: 4px solid transparent;
    border-right: 4px solid transparent;
}

.arrow-up {
    border-bottom: 4px solid #a3a3a3;
}

.arrow-down {
    margin-top: auto;
    border-top: 4px solid #505050;
}

.thumb {
    width: 13px;
    height: 266px;
    margin-top: 6px;
    background: #c1c1c1;
}

/* element path */
.path {
    flex: none;
    height: 27px;
    border-top: 1px solid #d1d1d1;
    background: #f8f8f8;
    display: flex;
    align-items: center;
    gap: 10px;
    padding-left: 12px;
    font-size: 11px;
    font-weight: 700;
    color: #484848;
    position: relative;
}

.resize {
    position: absolute;
    right: 4px;
    bottom: 4px;
    width: 0;
    height: 0;
    border-left: 10px solid transparent;
    border-bottom: 10px solid #bdbdbd;
}
```
